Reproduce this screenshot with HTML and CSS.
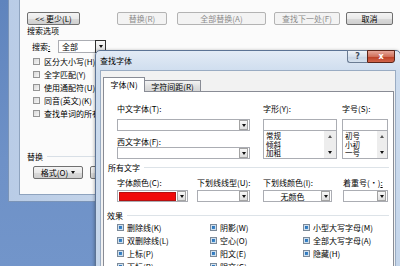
FILE: index.html
```html
<!DOCTYPE html>
<html lang="zh-CN">
<head>
    <meta charset="UTF-8">
    <meta name="viewport" content="width=device-width, initial-scale=1.0">
    <title>查找和替换 - 查找字体</title>
    <link rel="stylesheet" href="styles.css">
</head>
<body>
    <div class="find-win">
        <div class="find-body">
            <div class="btn-row">
                <button class="btn btn-less">&lt;&lt; 更少(L)</button>
                <button class="btn btn-replace" disabled>替换(R)</button>
                <button class="btn btn-all" disabled>全部替换(A)</button>
                <button class="btn btn-next" disabled>查找下一处(F)</button>
                <button class="btn btn-cancel">取消</button>
            </div>
            <div class="group-title">搜索选项</div>
            <div class="search-row">
                <span class="search-label">搜索<u>:</u></span>
                <span class="select">
                    <span class="select-text">全部</span>
                    <span class="drop drop-dark"><i class="arrow"></i></span>
                </span>
            </div>
            <ul class="opt-list">
                <li><span class="cb"></span>区分大小写(H)</li>
                <li><span class="cb"></span>全字匹配(Y)</li>
                <li><span class="cb"></span>使用通配符(U)</li>
                <li><span class="cb"></span>同音(英文)(K)</li>
                <li><span class="cb"></span>查找单词的所有形式(英文)(W)</li>
            </ul>
            <div class="group-title with-line">替换</div>
            <div class="btn-row2">
                <button class="btn btn-format">格式(O) <i class="arrow"></i></button>
                <button class="btn btn-special">特殊格式(E) <i class="arrow"></i></button>
            </div>
        </div>
    </div>

    <div class="font-win">
        <div class="title-bar">
            <span class="title">查找字体</span>
            <div class="caps">
                <span class="cap cap-help">?</span>
                <span class="cap cap-close">x</span>
            </div>
        </div>
        <div class="font-body">
            <div class="tabs">
                <span class="tab tab-active">字体(N)</span>
                <span class="tab">字符间距(R)</span>
            </div>
            <div class="panel">
                <div class="top-area">
                    <div class="col col-a">
                        <div class="lbl">中文字体(T):</div>
                        <div class="combo"><span class="drop"><i class="arrow"></i></span></div>
                        <div class="lbl lbl-2">西文字体(F):</div>
                        <div class="combo combo-2"><span class="drop"><i class="arrow"></i></span></div>
                    </div>
                    <div class="col col-b">
                        <div class="lbl">字形(Y):</div>
                        <div class="field"></div>
                        <div class="listbox">
                            <div class="list-items">
                                <div>常规</div>
                                <div>倾斜</div>
                                <div>加粗</div>
                            </div>
                            <div class="sbar"><i class="arrow arrow-up"></i><i class="arrow"></i></div>
                        </div>
                    </div>
                    <div class="col col-c">
                        <div class="lbl">字号(S):</div>
                        <div class="field"></div>
                        <div class="listbox">
                            <div class="list-items">
                                <div>初号</div>
                                <div>小初</div>
                                <div>一号</div>
                            </div>
                            <div class="sbar sbar-narrow"><i class="arrow arrow-up"></i><i class="arrow"></i></div>
                        </div>
                    </div>
                </div>

                <div class="section">所有文字</div>
                <div class="row2">
                    <div class="cell cell-color">
                        <div class="lbl">字体颜色(C):</div>
                        <div class="combo"><span class="swatch"></span><span class="drop"><i class="arrow"></i></span></div>
                    </div>
                    <div class="cell cell-uline">
                        <div class="lbl">下划线线型(U):</div>
                        <div class="combo"><span class="drop"><i class="arrow"></i></span></div>
                    </div>
                    <div class="cell cell-ucolor">
                        <div class="lbl">下划线颜色(I):</div>
                        <div class="combo"><span class="combo-text">无颜色</span><span class="drop"><i class="arrow"></i></span></div>
                    </div>
                    <div class="cell cell-emph">
                        <div class="lbl">着重号(·)<u>:</u></div>
                        <div class="combo"><span class="drop"><i class="arrow"></i></span></div>
                    </div>
                </div>

                <div class="section section-fx">效果</div>
                <ul class="fx-grid">
                    <li><span class="cb cb-mixed"></span>删除线(K)</li>
                    <li><span class="cb cb-mixed"></span>双删除线(L)</li>
                    <li><span class="cb cb-mixed"></span>上标(P)</li>
                    <li><span class="cb cb-mixed"></span>下标(B)</li>
                    <li><span class="cb cb-mixed"></span>阴影(W)</li>
                    <li><span class="cb cb-mixed"></span>空心(O)</li>
                    <li><span class="cb cb-mixed"></span>阳文(E)</li>
                    <li><span class="cb cb-mixed"></span>阴文(G)</li>
                    <li><span class="cb cb-mixed"></span>小型大写字母(M)</li>
                    <li><span class="cb cb-mixed"></span>全部大写字母(A)</li>
                    <li><span class="cb cb-mixed"></span>隐藏(H)</li>
                </ul>
            </div>
        </div>
    </div>
</body>
</html>
```

FILE: styles.css
```css
html, body {
    margin: 0;
    width: 400px;
    height: 266px;
    overflow: hidden;
}
body {
    position: relative;
    background: linear-gradient(#5f84bd, #6e91c7 60%, #7295ca);
    font-family: "Noto Sans CJK SC", "DejaVu Sans", sans-serif;
    font-size: 8px;
    line-height: 9px;
    color: #000;
}
ul {
    list-style: none;
    margin: 0;
    padding: 0;
}
u {
    text-decoration: underline;
}

/* generic bits */
.arrow {
    display: inline-block;
    width: 0;
    height: 0;
    border-left: 2.5px solid transparent;
    border-right: 2.5px solid transparent;
    border-top: 3px solid #111;
}
.arrow-up {
    border-top: none;
    border-bottom: 3px solid #555;
}
.drop {
    box-sizing: border-box;
    width: 9px;
    height: 10px;
    margin: 0 0 0 auto;
    display: flex;
    align-items: center;
    justify-content: center;
    border: 1px solid #a3a3a3;
    background: linear-gradient(#f8f8f8, #dedede);
}
.drop-dark {
    width: 11px;
    height: 13px;
    border-color: #303030;
}
.cb {
    box-sizing: border-box;
    width: 7px;
    height: 7px;
    margin-right: 4px;
    border: 1px solid #959595;
    background: linear-gradient(135deg, #d8d8d8, #f7f7f7);
    flex-shrink: 0;
}
.cb-mixed {
    margin-right: 3px;
    border-color: #7c8a99;
    background: linear-gradient(135deg, #1d5ea8, #4f9fdc);
    box-shadow: inset 0 0 0 1px #cfe0ef;
}

/* buttons */
.btn {
    box-sizing: border-box;
    height: 13px;
    padding: 0;
    font-family: inherit;
    font-size: 8px;
    line-height: 11px;
    color: #000;
    border: 1px solid #707070;
    border-radius: 2px;
    background: linear-gradient(#f4f4f4, #e9e9e9 50%, #dadada 51%, #cfcfcf);
    display: flex;
    align-items: center;
    justify-content: center;
    gap: 3px;
}
.btn:disabled {
    color: #8b8b8b;
    border-color: #b3b3b3;
    background: #f3f3f3;
}

/* outer find & replace window */
.find-win {
    position: absolute;
    left: 8px;
    top: -4px;
    width: 420px;
    height: 206px;
    box-sizing: border-box;
    padding: 0 0 6px 10px;
    background: linear-gradient(90deg, #b9cce6, #cddbed 40%, #c9d8eb);
    border-left: 1px solid #7b94b7;
    border-bottom: 1px solid #7b94b7;
}
.find-body {
    height: 100%;
    box-sizing: border-box;
    padding: 16px 0 0 7px;
    background: #fbfbfb;
    border-left: 1px solid #8ea3be;
    border-bottom: 1px solid #8ea3be;
}
.btn-row {
    display: flex;
}
.btn-less {
    width: 53px;
}
.btn-replace {
    width: 50px;
    margin-left: 37px;
}
.btn-all {
    width: 89px;
    margin-left: 10px;
}
.btn-next {
    width: 66px;
    margin-left: 8px;
}
.btn-cancel {
    width: 47px;
    margin-left: 6px;
}
.group-title {
    margin-top: 1px;
    height: 9px;
    display: flex;
    align-items: center;
}
.with-line {
    margin-top: 32px;
}
.with-line::after {
    content: "";
    flex: 1;
    margin: 0 0 0 4px;
    border-top: 1px solid #d8dfe6;
}
.search-row {
    margin-top: 5px;
    padding-left: 5px;
    display: flex;
    align-items: center;
    height: 13px;
}
.search-label {
    width: 26px;
}
.select {
    display: flex;
    align-items: center;
    height: 13px;
}
.select-text {
    box-sizing: border-box;
    width: 37px;
    height: 13px;
    padding-left: 3px;
    line-height: 11px;
    border: 1px solid #abadb3;
    border-right: none;
    background: #fff;
}
.opt-list {
    margin-top: 2px;
    padding-left: 6px;
}
.opt-list li {
    height: 13px;
    display: flex;
    align-items: center;
    white-space: nowrap;
}
.opt-list .cb {
    margin-right: 4px;
}
.btn-row2 {
    margin-top: 5px;
    padding-left: 6px;
    display: flex;
    gap: 7px;
}
.btn-format {
    width: 50px;
}
.btn-special {
    width: 62px;
}

/* font dialog */
.font-win {
    position: absolute;
    left: 95px;
    top: 50px;
    width: 306px;
    height: 222px;
    box-sizing: border-box;
    padding: 0 4px;
    border: 1px solid #5c7394;
    border-radius: 5px 5px 0 0;
    background: linear-gradient(#e3ebf5, #cddcee 22px, #c4d5ea);
    display: flex;
    flex-direction: column;
    box-shadow: -1px 0 3px rgba(0, 0, 0, 0.25);
}
.title-bar {
    height: 19px;
    flex-shrink: 0;
    display: flex;
    align-items: center;
}
.caps {
    align-self: flex-start;
    margin: -1px 1px 0 auto;
    display: flex;
}
.cap {
    box-sizing: border-box;
    height: 13px;
    display: flex;
    align-items: center;
    justify-content: center;
    font-family: "DejaVu Sans", sans-serif;
    font-weight: bold;
    font-size: 8px;
    border: 1px solid #6b7c93;
}
.cap-help {
    width: 20px;
    color: #3d4b5c;
    border-radius: 0 0 0 3px;
    border-right: none;
    background: linear-gradient(#f0f4f9, #d6e0ec 50%, #c7d4e4 51%, #d5e1ee);
}
.cap-close {
    width: 28px;
    color: #fff;
    border-color: #5b2419;
    border-radius: 0 0 3px 0;
    background: linear-gradient(#e7a799, #d0705b 50%, #bb3c22 51%, #d1654a);
}
.font-body {
    flex: 1;
    display: flex;
    flex-direction: column;
    padding: 6px 1px 0 2px;
    background: #f2f2f2;
    border: 1px solid #9aacc3;
    border-bottom: none;
}
.tabs {
    height: 14px;
    display: flex;
    align-items: flex-end;
}
.tab {
    box-sizing: border-box;
    height: 11px;
    width: 57px;
    margin-left: -1px;
    display: flex;
    align-items: center;
    justify-content: center;
    border: 1px solid #898c95;
    border-bottom: none;
    background: linear-gradient(#f4f4f4, #e2e2e2 50%, #d6d6d6);
}
.tab-active {
    position: relative;
    z-index: 1;
    width: 42px;
    height: 15px;
    margin: 0 0 -1px 0;
    padding-bottom: 2px;
    background: #fff;
}
.panel {
    flex: 1;
    background: #fff;
    border: 1px solid #898c95;
}

.top-area {
    display: flex;
    margin-top: 12px;
    padding-left: 13px;
}
.lbl {
    height: 9px;
    white-space: nowrap;
}
.col .lbl {
    margin-bottom: 6px;
}
.col .lbl-2 {
    margin: 6px 0 1px;
}
.col-a {
    width: 133px;
}
.col-b {
    width: 74px;
    margin-left: 13px;
}
.col-c {
    width: 46px;
    margin-left: 5px;
}
.combo {
    box-sizing: border-box;
    height: 12px;
    display: flex;
    align-items: center;
    padding-right: 1px;
    border: 1px solid #abadb3;
    background: #fff;
}
.field {
    box-sizing: border-box;
    height: 12px;
    border: 1px solid #abadb3;
}
.listbox {
    box-sizing: border-box;
    height: 28px;
    display: flex;
    border: 1px solid #abadb3;
    border-top: none;
}
.list-items {
    flex: 1;
    padding: 1px 0 0 2px;
    font-size: 7.5px;
    line-height: 8.5px;
}
.sbar {
    width: 12px;
    display: flex;
    flex-direction: column;
    align-items: center;
    justify-content: space-between;
    padding: 4px 0;
    background: #ededed;
}
.sbar-narrow {
    width: 10px;
}

.section {
    margin-top: 4px;
    padding-left: 4px;
    height: 9px;
    display: flex;
    align-items: center;
}
.section::after {
    content: "";
    flex: 1;
    margin: 0 4px 0 4px;
    border-top: 1px solid #dde3e8;
}
.row2 {
    display: flex;
    margin-top: 6px;
    padding-left: 13px;
}
.cell .lbl {
    margin-bottom: 3px;
}
.cell-color {
    width: 71px;
}
.cell-uline {
    width: 53px;
    margin-left: 9px;
}
.cell-ucolor {
    width: 69px;
    margin-left: 13px;
}
.cell-emph {
    width: 45px;
    margin-left: 11px;
}
.swatch {
    flex: 1;
    height: 9px;
    margin: 0 1px 0 1px;
    background: #f10a0a;
    border: 1px solid #b41010;
    box-sizing: border-box;
}
.combo-text {
    flex: 1;
    text-align: center;
}
.section-fx {
    margin-top: 9px;
    padding-left: 3px;
}
.fx-grid {
    margin-top: 1px;
    padding-left: 13px;
    display: grid;
    grid-template-rows: repeat(4, 13px);
    grid-auto-flow: column;
    grid-auto-columns: 93px;
}
.fx-grid li {
    display: flex;
    align-items: center;
    white-space: nowrap;
}
```
